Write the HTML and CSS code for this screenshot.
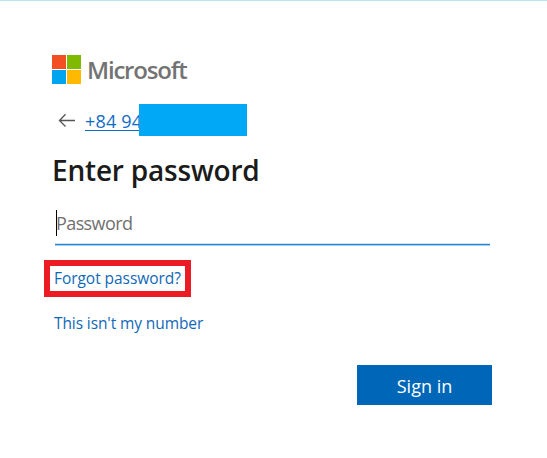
FILE: index.html
```html
<!DOCTYPE html>
<html lang="en">
<head>
    <meta charset="UTF-8">
    <meta name="viewport" content="width=device-width, initial-scale=1.0">
    <title>Sign in</title>
    <link rel="stylesheet" href="styles.css">
</head>
<body>

    <form class="login">
        <div class="logo">
            <div class="squares">
                <span class="red"></span>
                <span class="green"></span>
                <span class="blue"></span>
                <span class="yellow"></span>
            </div>
            <span class="brand">Microsoft</span>
        </div>

        <div class="identity">
            <svg class="back" width="18" height="14" viewBox="0 0 18 14">
                <path d="M17 7.5H2M7.5 1.2L1.5 7.5L7.5 13.5" fill="none" stroke="#555" stroke-width="1.3"/>
            </svg>
            <a class="phone">+84 94</a>
            <span class="cover"></span>
        </div>

        <h1 class="title">Enter password</h1>

        <div class="field">
            <span class="caret"></span>
            <input type="password" class="input" placeholder="Password">
        </div>

        <div class="forgot"><a class="link link-forgot">Forgot password?</a></div>
        <div class="other"><a class="link link-other">This isn't my number</a></div>

        <div class="buttons">
            <button type="button" class="signin">Sign in</button>
        </div>
    </form>

</body>
</html>
```

FILE: styles.css
```css
* {
    box-sizing: border-box;
}

body {
    margin: 0;
    height: 458px;
    background-color: #fff;
    border-top: 1px solid #b9e2f7;
    font-family: "Open Sans", "Noto Sans", sans-serif;
    overflow: hidden;
}

.login {
    width: 440px;
    margin: 54px 0 0 52px;
}

.logo {
    display: flex;
    align-items: center;
    height: 29px;
}

.squares {
    display: grid;
    grid-template-columns: 14px 14px;
    grid-template-rows: 14px 14px;
    gap: 1px;
}

.red {
    background-color: #f25022;
}

.green {
    background-color: #7fba00;
}

.blue {
    background-color: #00a4ef;
}

.yellow {
    background-color: #ffb900;
}

.brand {
    margin-left: 6px;
    font-size: 24px;
    font-weight: 600;
    line-height: 29px;
    letter-spacing: -1.2px;
    color: #737373;
}

.identity {
    display: flex;
    align-items: center;
    height: 32px;
    margin-top: 20px;
    padding-left: 6px;
}

.phone {
    width: 54px;
    margin-left: 9px;
    padding-top: 3px;
    font-size: 18px;
    line-height: 25px;
    letter-spacing: 0.2px;
    white-space: nowrap;
    color: #0f6cc4;
    text-decoration: underline;
    text-decoration-thickness: 1px;
    text-underline-offset: 2px;
}

.cover {
    z-index: 1;
    width: 108px;
    height: 32px;
    background-color: #00a8f5;
}

.title {
    margin: 15px 0 0;
    font-size: 28px;
    font-weight: 600;
    line-height: 38px;
    letter-spacing: -0.2px;
    color: #1b1b1b;
}

.field {
    display: flex;
    align-items: center;
    width: 435px;
    height: 36px;
    margin: 20px 0 0 3px;
    padding-left: 1px;
    border-bottom: 1px solid #2484d4;
    box-shadow: 0 1px 0 #a9d0ef, inset 0 -1px 0 #cfe3f4;
}

.caret {
    width: 1px;
    height: 26px;
    margin-top: -7px;
    background-color: #000;
}

.input {
    width: 400px;
    height: 30px;
    margin: -7px 0 0 -1px;
    padding: 0;
    border: 0;
    outline: 0;
    background: none;
    font-family: inherit;
    font-size: 18px;
    letter-spacing: -0.6px;
}

.input::placeholder {
    color: #707070;
    opacity: 1;
}

.forgot {
    display: flex;
    align-items: center;
    width: 147px;
    height: 37px;
    margin: 15px 0 0 -8px;
    padding: 0 0 2px 4px;
    border: 6px solid #ec1c24;
}

.link {
    font-size: 15.5px;
    line-height: 22px;
    white-space: nowrap;
    color: #1069b8;
}

.link-forgot {
    letter-spacing: -0.05px;
}

.link-other {
    letter-spacing: -0.1px;
}

.other {
    display: flex;
    margin: 15px 0 0 2px;
}

.buttons {
    display: flex;
    justify-content: flex-end;
    margin-top: 31px;
}

.signin {
    width: 135px;
    height: 40px;
    padding: 2px 0 0;
    border: 0;
    background-color: #0067b8;
    font-family: inherit;
    font-size: 18px;
    color: #fff;
}
```
